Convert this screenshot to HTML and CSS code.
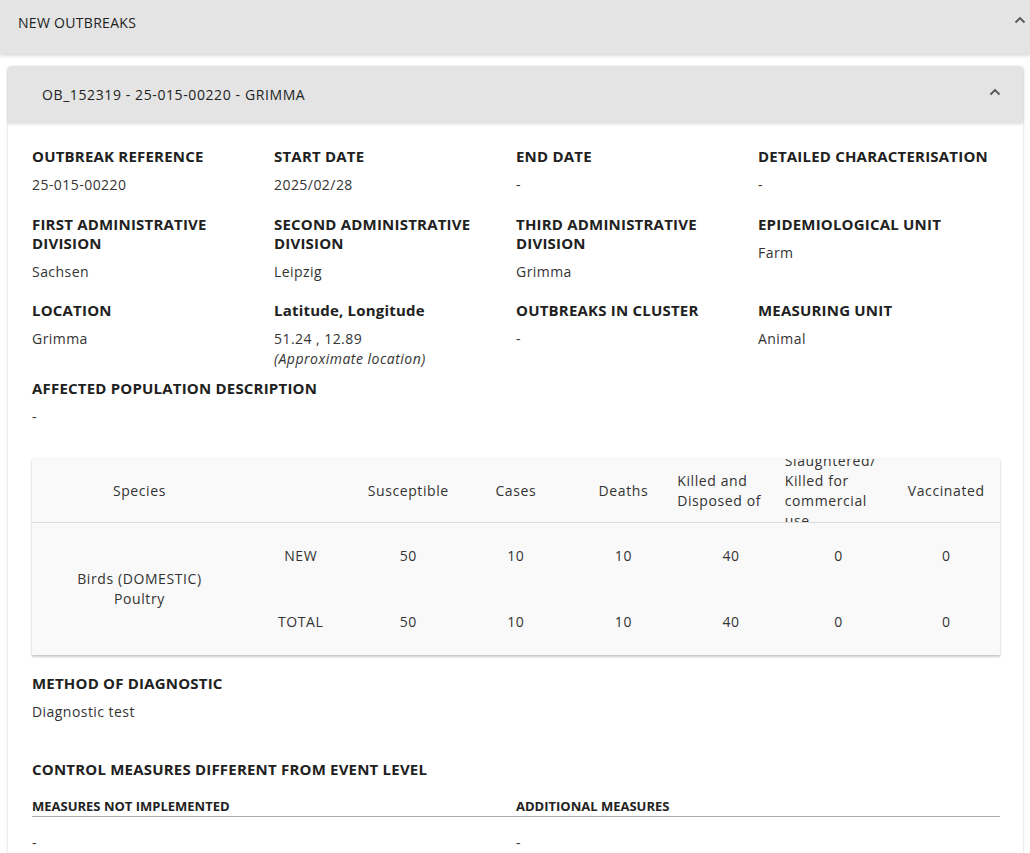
FILE: index.html
```html
<!DOCTYPE html>
<html lang="en">
<head>
  <meta charset="UTF-8">
  <meta name="viewport" content="width=device-width, initial-scale=1">
  <title>New Outbreaks</title>
  <link rel="stylesheet" href="styles.css">
</head>
<body>
  <div class="panel-header">
    <span>NEW OUTBREAKS</span>
    <svg class="chevron" width="12" height="8" viewBox="0 0 12 8"><polyline points="1.5,6.5 6,2 10.5,6.5" /></svg>
  </div>

  <div class="panel-body">
    <div class="card">
      <div class="card-header">
        <span>OB_152319 - 25-015-00220 - GRIMMA</span>
        <svg class="chevron" width="12" height="8" viewBox="0 0 12 8"><polyline points="1.5,6.5 6,2 10.5,6.5" /></svg>
      </div>

      <div class="card-body">
        <div class="info-grid">
          <div class="field">
            <div class="label">OUTBREAK REFERENCE</div>
            <div class="value">25-015-00220</div>
          </div>
          <div class="field">
            <div class="label">START DATE</div>
            <div class="value">2025/02/28</div>
          </div>
          <div class="field">
            <div class="label">END DATE</div>
            <div class="value">-</div>
          </div>
          <div class="field">
            <div class="label">DETAILED CHARACTERISATION</div>
            <div class="value">-</div>
          </div>

          <div class="field">
            <div class="label">FIRST ADMINISTRATIVE DIVISION</div>
            <div class="value">Sachsen</div>
          </div>
          <div class="field">
            <div class="label">SECOND ADMINISTRATIVE DIVISION</div>
            <div class="value">Leipzig</div>
          </div>
          <div class="field">
            <div class="label">THIRD ADMINISTRATIVE DIVISION</div>
            <div class="value">Grimma</div>
          </div>
          <div class="field">
            <div class="label">EPIDEMIOLOGICAL UNIT</div>
            <div class="value">Farm</div>
          </div>

          <div class="field">
            <div class="label">LOCATION</div>
            <div class="value">Grimma</div>
          </div>
          <div class="field">
            <div class="label">Latitude, Longitude</div>
            <div class="value">51.24 , 12.89</div>
            <div class="value note">(Approximate location)</div>
          </div>
          <div class="field">
            <div class="label">OUTBREAKS IN CLUSTER</div>
            <div class="value">-</div>
          </div>
          <div class="field">
            <div class="label">MEASURING UNIT</div>
            <div class="value">Animal</div>
          </div>
        </div>

        <div class="field population">
          <div class="label">AFFECTED POPULATION DESCRIPTION</div>
          <div class="value">-</div>
        </div>

        <div class="species-table">
          <table>
            <colgroup>
              <col class="col-wide">
              <col><col><col><col><col><col><col>
            </colgroup>
            <thead>
              <tr>
                <th><div class="th-inner">Species</div></th>
                <th><div class="th-inner"></div></th>
                <th><div class="th-inner">Susceptible</div></th>
                <th><div class="th-inner">Cases</div></th>
                <th><div class="th-inner">Deaths</div></th>
                <th><div class="th-inner">Killed and Disposed of</div></th>
                <th><div class="th-inner">Slaughtered/ Killed for commercial use</div></th>
                <th><div class="th-inner">Vaccinated</div></th>
              </tr>
            </thead>
            <tbody>
              <tr>
                <td rowspan="2">Birds (DOMESTIC)<br>Poultry</td>
                <td>NEW</td>
                <td>50</td>
                <td>10</td>
                <td>10</td>
                <td>40</td>
                <td>0</td>
                <td>0</td>
              </tr>
              <tr>
                <td>TOTAL</td>
                <td>50</td>
                <td>10</td>
                <td>10</td>
                <td>40</td>
                <td>0</td>
                <td>0</td>
              </tr>
            </tbody>
          </table>
        </div>

        <div class="field diagnostic">
          <div class="label">METHOD OF DIAGNOSTIC</div>
          <div class="value">Diagnostic test</div>
        </div>

        <div class="measures">
          <div class="label">CONTROL MEASURES DIFFERENT FROM EVENT LEVEL</div>
          <div class="measures-grid">
            <div class="measures-head">MEASURES NOT IMPLEMENTED</div>
            <div class="measures-head">ADDITIONAL MEASURES</div>
            <div class="value">-</div>
            <div class="value">-</div>
          </div>
        </div>
      </div>
    </div>
  </div>
</body>
</html>
```

FILE: styles.css
```css
body {
  font-family: "Open Sans", sans-serif;
  background-color: #ffffff;
  color: #222;
  margin: 0;
  padding: 0;
}

.chevron polyline {
  fill: none;
  stroke: #555;
  stroke-width: 1.8;
}

.panel-header {
  height: 54px;
  box-sizing: border-box;
  display: flex;
  align-items: flex-start;
  justify-content: space-between;
  padding: 13px 4px 0 18px;
  background-color: #e4e4e4;
  box-shadow: 0 2px 3px rgba(0, 0, 0, 0.15);
  font-size: 14px;
  line-height: 20px;
  letter-spacing: 0.3px;
}

.panel-header .chevron {
  margin-top: 3px;
}

.panel-body {
  padding: 12px 7px 0 8px;
}

.card {
  border-radius: 4px 4px 0 0;
  box-shadow: 0 1px 3px rgba(0, 0, 0, 0.2);
  background-color: #fff;
}

.card-header {
  height: 57px;
  display: flex;
  align-items: center;
  justify-content: space-between;
  padding: 0 22px 0 34px;
  background-color: #e4e4e4;
  border-radius: 4px 4px 0 0;
  box-shadow: 0 1px 3px rgba(0, 0, 0, 0.15);
  font-size: 14px;
  letter-spacing: 0.6px;
}

.card-header .chevron {
  margin-top: -5px;
}

.card-body {
  padding: 24px 23px 40px 24px;
}

.info-grid {
  display: grid;
  grid-template-columns: repeat(4, 1fr);
  row-gap: 19.5px;
}

.label {
  font-size: 15px;
  font-weight: 700;
  line-height: 19px;
  letter-spacing: 0.2px;
  color: #212121;
  padding-right: 10px;
}

.value {
  font-size: 14px;
  line-height: 20px;
  letter-spacing: 0.45px;
  color: #333;
  margin-top: 9px;
}

.value.note {
  margin-top: 0;
  font-style: italic;
  line-height: 19px;
  letter-spacing: 0.5px;
}

.population {
  margin-top: 11px;
}

.species-table {
  margin-top: 32px;
  background-color: #f9f9f9;
  box-shadow: 0 2px 2px rgba(0, 0, 0, 0.2), 0 0 2px rgba(0, 0, 0, 0.1);
  overflow: hidden;
}

table {
  width: 100%;
  border-collapse: collapse;
  table-layout: fixed;
  font-size: 14px;
  letter-spacing: 0.6px;
  color: #333;
}

.col-wide {
  width: 22.2%;
}

th {
  font-weight: 400;
  padding: 0;
  border-bottom: 1px solid #ddd;
}

/* header cells keep a fixed height; long titles overflow and get clipped */
.th-inner {
  height: 63px;
  display: flex;
  align-items: center;
  justify-content: center;
  overflow: hidden;
  line-height: 20px;
  text-align: left;
}

td {
  height: 66px;
  padding: 0;
  text-align: center;
  line-height: 20px;
}

.diagnostic {
  margin-top: 19px;
}

.measures {
  margin-top: 38px;
}

.measures-grid {
  display: grid;
  grid-template-columns: 1fr 1fr;
  margin-top: 19px;
}

.measures-head {
  font-size: 13px;
  font-weight: 700;
  line-height: 17px;
  padding-bottom: 1px;
  border-bottom: 1px solid #aaa;
}

.measures-grid .value {
  margin-top: 16px;
}
```
